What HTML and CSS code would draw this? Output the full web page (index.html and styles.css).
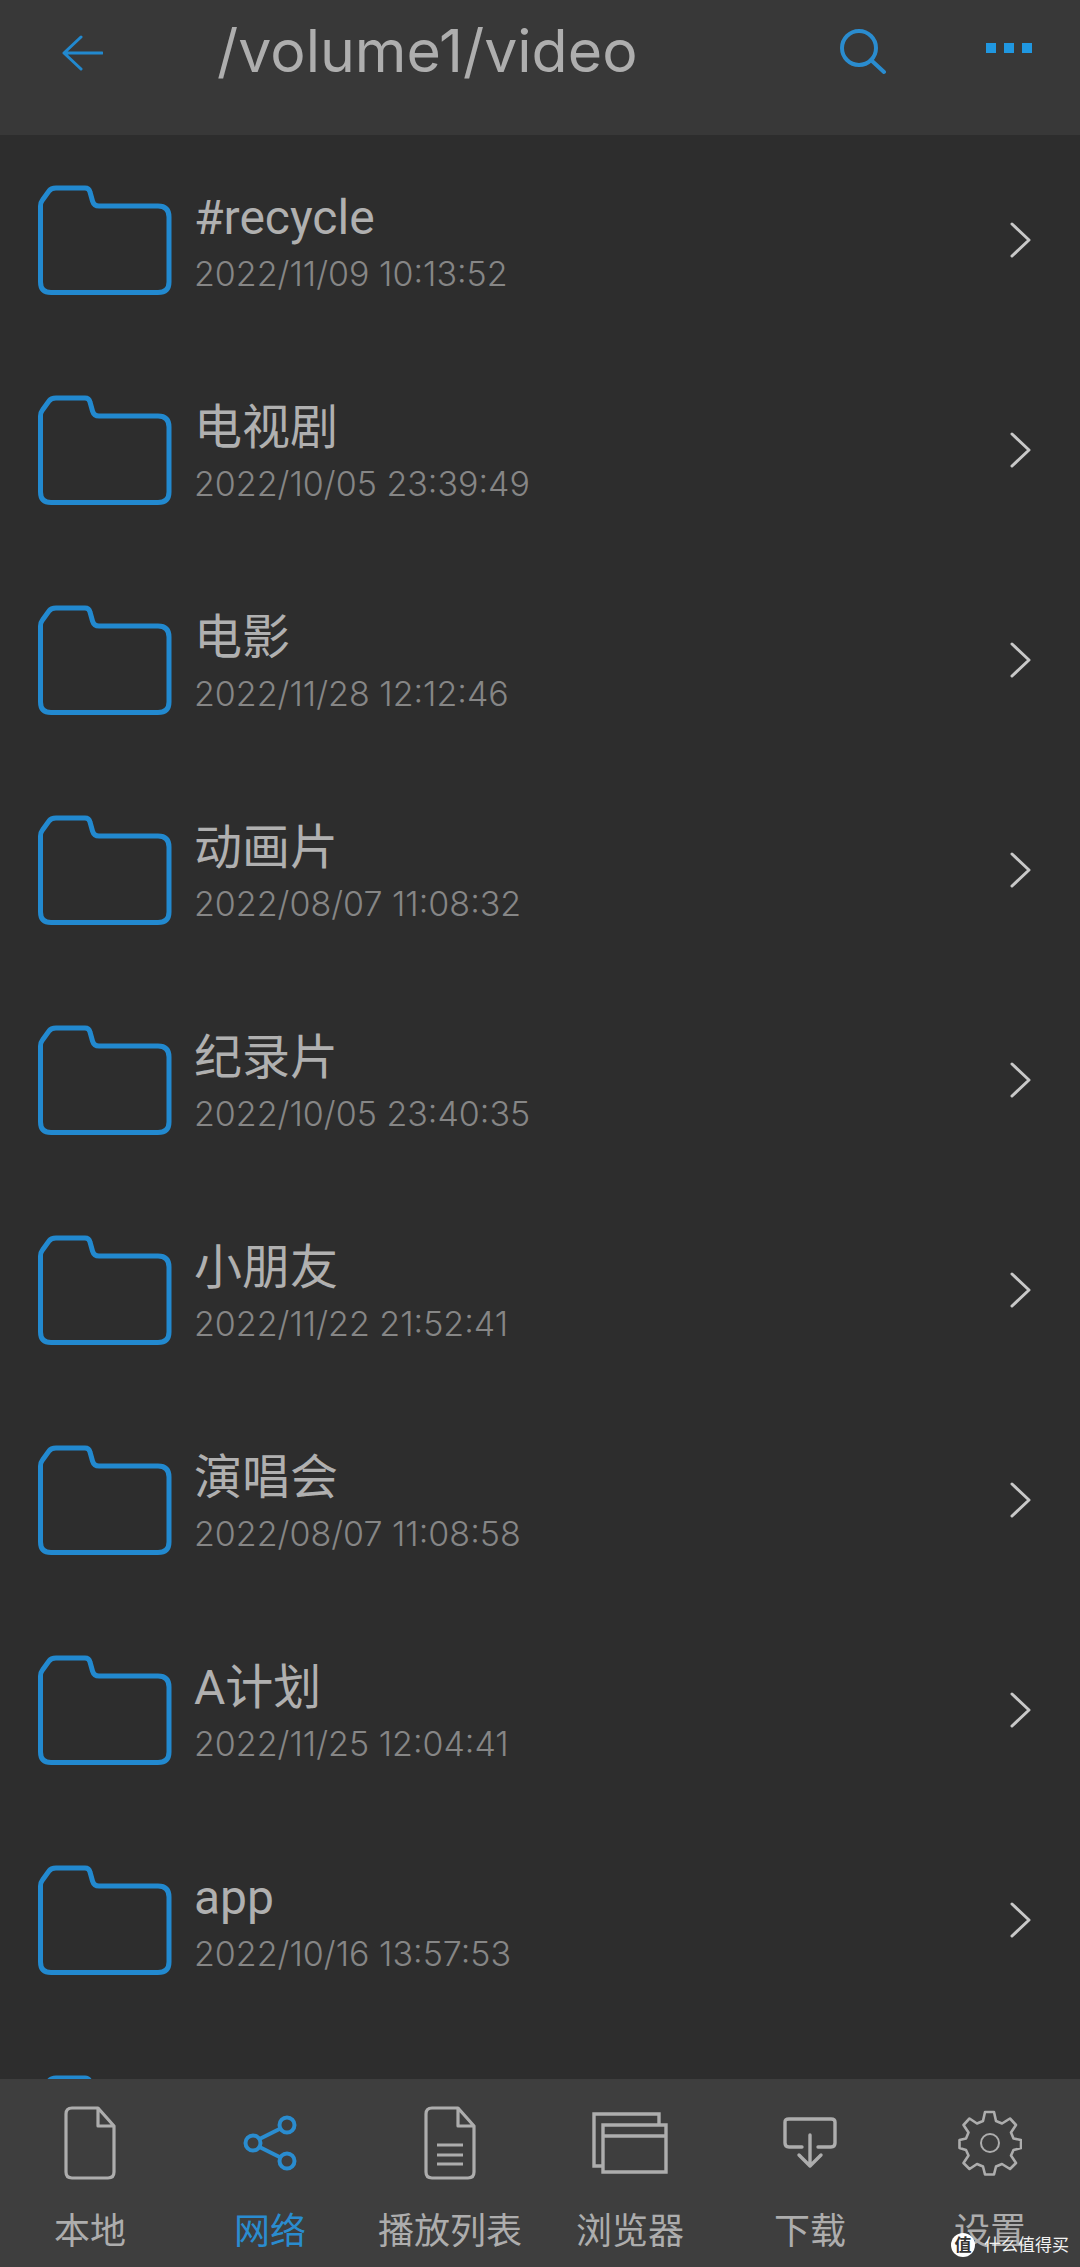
FILE: index.html
```html
<!DOCTYPE html>
<html lang="zh">
<head>
<meta charset="utf-8">
<title>/volume1/video</title>
<link rel="stylesheet" href="styles.css">
</head>
<body>
<svg class="defs" width="0" height="0">
  <defs>
    <symbol id="folder" viewBox="0 0 134 112">
      <path d="M2.500 22 Q2.500 18.500 4.500 16 L11 7 Q13 4 18 4 H47 Q51 4 52 8 L54.500 17 Q56 22 61 22 H120 Q131 22 131 33 V98 Q131 108.500 120 108.500 H13 Q2.500 108.500 2.500 98 Z" fill="none" stroke="#2289cf" stroke-width="5" stroke-linejoin="round"/>
    </symbol>
    <symbol id="chev" viewBox="0 0 22 36">
      <path d="M2 2 L19 18 L2 34" fill="none" stroke="#c8c8c8" stroke-width="3" stroke-linecap="round" stroke-linejoin="round"/>
    </symbol>
  </defs>
</svg>
<div class="app">
  <header class="top">
    <svg class="ic-back" width="42" height="36" viewBox="0 0 42 36"><path d="M20 2 L3 18 L20 34 M3 18 H41" fill="none" stroke="#2289cf" stroke-width="3" stroke-linecap="round" stroke-linejoin="round"/></svg>
    <h1 class="path">/volume1/video</h1>
    <svg class="ic-search" width="46" height="46" viewBox="0 0 46 46"><circle cx="19" cy="19" r="17" fill="none" stroke="#2a8ccf" stroke-width="4"/><path d="M31 31 L44 43" fill="none" stroke="#2a8ccf" stroke-width="4" stroke-linecap="round"/></svg>
    <div class="dots"><i></i><i></i><i></i></div>
  </header>
  <main class="list">
    <div class="row"><svg class="folder"><use href="#folder"/></svg><div class="txt"><div class="name">#recycle</div><div class="date">2022/11/09 10:13:52</div></div><svg class="chev"><use href="#chev"/></svg></div>
    <div class="row"><svg class="folder"><use href="#folder"/></svg><div class="txt"><div class="name">电视剧</div><div class="date">2022/10/05 23:39:49</div></div><svg class="chev"><use href="#chev"/></svg></div>
    <div class="row"><svg class="folder"><use href="#folder"/></svg><div class="txt"><div class="name">电影</div><div class="date">2022/11/28 12:12:46</div></div><svg class="chev"><use href="#chev"/></svg></div>
    <div class="row"><svg class="folder"><use href="#folder"/></svg><div class="txt"><div class="name">动画片</div><div class="date">2022/08/07 11:08:32</div></div><svg class="chev"><use href="#chev"/></svg></div>
    <div class="row"><svg class="folder"><use href="#folder"/></svg><div class="txt"><div class="name">纪录片</div><div class="date">2022/10/05 23:40:35</div></div><svg class="chev"><use href="#chev"/></svg></div>
    <div class="row"><svg class="folder"><use href="#folder"/></svg><div class="txt"><div class="name">小朋友</div><div class="date">2022/11/22 21:52:41</div></div><svg class="chev"><use href="#chev"/></svg></div>
    <div class="row"><svg class="folder"><use href="#folder"/></svg><div class="txt"><div class="name">演唱会</div><div class="date">2022/08/07 11:08:58</div></div><svg class="chev"><use href="#chev"/></svg></div>
    <div class="row"><svg class="folder"><use href="#folder"/></svg><div class="txt"><div class="name">A计划</div><div class="date">2022/11/25 12:04:41</div></div><svg class="chev"><use href="#chev"/></svg></div>
    <div class="row"><svg class="folder"><use href="#folder"/></svg><div class="txt"><div class="name">app</div><div class="date">2022/10/16 13:57:53</div></div><svg class="chev"><use href="#chev"/></svg></div>
    <div class="row"><svg class="folder"><use href="#folder"/></svg></div>
  </main>
  <nav class="nav">
    <div class="tab">
      <div class="ico"><svg width="52" height="74" viewBox="0 0 52 74"><path d="M34 2 H8 Q2 2 2 8 V66 Q2 72 8 72 H44 Q50 72 50 66 V20 Z M34 2 V20 H50" fill="none" stroke="#adadad" stroke-width="3.2" stroke-linejoin="round"/></svg></div>
      <span>本地</span>
    </div>
    <div class="tab on">
      <div class="ico"><svg width="54" height="56" viewBox="0 0 54 56"><circle cx="44" cy="10" r="7.500" fill="none" stroke="#2a8ccf" stroke-width="4"/><circle cx="10" cy="28" r="7.500" fill="none" stroke="#2a8ccf" stroke-width="4"/><circle cx="44" cy="46" r="7.500" fill="none" stroke="#2a8ccf" stroke-width="4"/><path d="M16.500 24 L37.500 13.500 M16.500 32 L37.500 42.500" fill="none" stroke="#2a8ccf" stroke-width="4"/></svg></div>
      <span>网络</span>
    </div>
    <div class="tab">
      <div class="ico"><svg width="52" height="74" viewBox="0 0 52 74"><path d="M34 2 H8 Q2 2 2 8 V66 Q2 72 8 72 H44 Q50 72 50 66 V20 Z M34 2 V20 H50 M13 39 H39 M13 49 H39 M13 58 H39" fill="none" stroke="#adadad" stroke-width="3.2" stroke-linejoin="round"/></svg></div>
      <span>播放列表</span>
    </div>
    <div class="tab">
      <div class="ico"><svg width="76" height="62" viewBox="0 0 76 62"><path d="M11 54 H2 V2 H67 V13 M11 13 H74 V60 H11 Z M11 24 H74" fill="none" stroke="#adadad" stroke-width="3.400"/></svg></div>
      <span>浏览器</span>
    </div>
    <div class="tab">
      <div class="ico"><svg width="54" height="52" viewBox="0 0 54 52"><path d="M19 30 H6 Q2 30 2 26 V5 Q2 2 6 2 H48 Q52 2 52 5 V26 Q52 30 48 30 H35 M27 18 V49 M16 38 L27 49 L38 38" fill="none" stroke="#adadad" stroke-width="3.400" stroke-linecap="round" stroke-linejoin="round"/></svg></div>
      <span>下载</span>
    </div>
    <div class="tab">
      <div class="ico"><svg width="64" height="66" viewBox="0 0 64 66"><path d="M27 2 H36 L38 11 L44 13.500 L52 8.500 L58 15 L53 22.500 L55.500 28.500 L63 30 V38 L55.500 40 L53 45.500 L58 53 L52 59 L44 54 L38 56.500 L36 64.500 H27 L25 56.500 L19 54 L11.500 59 L5.500 53 L10.500 45.500 L8 40 L1.500 38 V30 L8 28.500 L10.500 22.500 L5.500 15 L11.500 8.500 L19 13.500 L25 11 Z" fill="none" stroke="#adadad" stroke-width="2.600" stroke-linejoin="round"/><circle cx="32" cy="33" r="9" fill="none" stroke="#adadad" stroke-width="2"/></svg></div>
      <span>设置</span>
    </div>
    <div class="mark"><b class="badge">值</b><span class="wm">什么值得买</span></div>
  </nav>
</div>
</body>
</html>
```

FILE: styles.css
```css
* { box-sizing: border-box; }
html, body { margin: 0; padding: 0; background: #2d2d2d; }
.defs { position: absolute; }
.app {
  width: 1080px;
  height: 2267px;
  display: flex;
  flex-direction: column;
  overflow: hidden;
  font-family: "Roboto", "Noto Sans CJK SC", sans-serif;
}
.top {
  flex: 0 0 135px;
  background: #383838;
  display: flex;
  align-items: flex-start;
  padding: 35px 0 0 61px;
}
.ic-back { flex: none; }
.path {
  margin: -24px 0 0 114px;
  flex: 0 0 621px;
  font-family: "Inter", sans-serif;
  font-size: 59px;
  line-height: 80px;
  font-weight: 400;
  color: #aeaeae;
  white-space: nowrap;
}
.ic-search { flex: none; margin: -6px 0 0 2px; }
.dots { flex: none; display: flex; gap: 8px; margin: 8px 0 0 100px; }
.dots i { width: 10px; height: 10px; background: #2097e0; display: block; }
.list { flex: 1; min-height: 0; overflow: hidden; }
.row {
  height: 210px;
  display: flex;
  align-items: center;
  padding: 0 48px 0 38px;
}
.folder { flex: none; width: 134px; height: 112px; }
.txt { flex: 1; min-width: 0; margin: 3px 0 0 22px; }
.name { font-size: 48px; line-height: 62px; color: #b0b0b0; }
.date {
  font-family: "Inter", sans-serif;
  font-size: 34px;
  line-height: 44px;
  font-weight: 300;
  color: #868686;
  margin-top: 3px;
}
.chev { flex: none; width: 22px; height: 36px; }
.nav {
  position: relative;
  flex: 0 0 188px;
  background: #3e3e3e;
  display: grid;
  grid-template-columns: repeat(6, 180px);
}
.tab {
  display: flex;
  flex-direction: column;
  align-items: center;
  color: #adadad;
  font-size: 36px;
  line-height: 48px;
}
.tab.on { color: #2a8ccf; }
.ico { height: 76px; margin-top: 26px; margin-bottom: 20px; display: flex; align-items: center; justify-content: center; }
.tab span { margin-top: 7px; white-space: nowrap; }
.mark {
  position: absolute;
  left: 951px;
  top: 154px;
  display: flex;
  align-items: center;
  gap: 9px;
}
.badge {
  width: 24px;
  height: 24px;
  border-radius: 50%;
  background: #fff;
  color: #333;
  font-size: 17px;
  line-height: 24px;
  text-align: center;
  font-weight: 700;
}
.wm { color: #f2f2f2; font-size: 17px; line-height: 24px; white-space: nowrap; }
```
